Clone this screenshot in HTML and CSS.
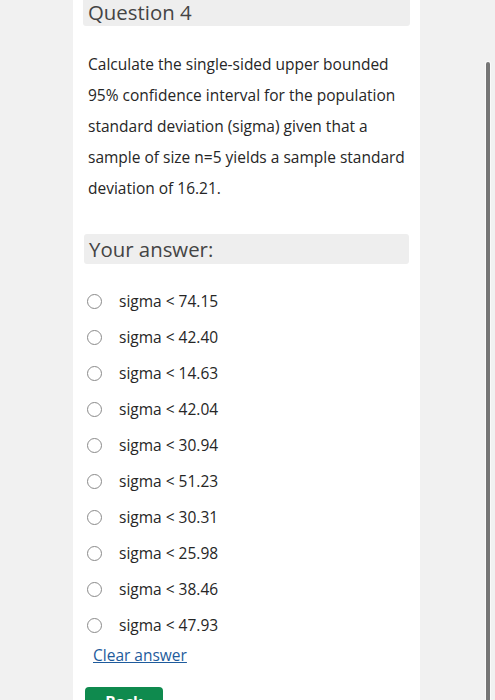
FILE: index.html
```html
<!DOCTYPE html>
<html lang="en">
<head>
<meta charset="utf-8">
<title>Question 4</title>
<link rel="stylesheet" href="styles.css">
</head>
<body>
<div class="page">
  <main class="card">
    <h2 class="qhead">Question 4</h2>
    <p class="qtext">Calculate the single-sided upper bounded<br>95% confidence interval for the population<br>standard deviation (sigma) given that a<br>sample of size n=5 yields a sample standard<br>deviation of 16.21.</p>
    <h3 class="answer-head">Your answer:</h3>
    <ul class="options">
      <li class="opt"><span class="radio"></span><span>sigma &lt; 74.15</span></li>
      <li class="opt"><span class="radio"></span><span>sigma &lt; 42.40</span></li>
      <li class="opt"><span class="radio"></span><span>sigma &lt; 14.63</span></li>
      <li class="opt"><span class="radio"></span><span>sigma &lt; 42.04</span></li>
      <li class="opt"><span class="radio"></span><span>sigma &lt; 30.94</span></li>
      <li class="opt"><span class="radio"></span><span>sigma &lt; 51.23</span></li>
      <li class="opt"><span class="radio"></span><span>sigma &lt; 30.31</span></li>
      <li class="opt"><span class="radio"></span><span>sigma &lt; 25.98</span></li>
      <li class="opt"><span class="radio"></span><span>sigma &lt; 38.46</span></li>
      <li class="opt"><span class="radio"></span><span>sigma &lt; 47.93</span></li>
    </ul>
    <a class="clear" href="#">Clear answer</a>
    <button class="back" type="button">Back</button>
  </main>
</div>
<div class="scrollbar"></div>
</body>
</html>
```

FILE: styles.css
```css
html, body {
  margin: 0;
  padding: 0;
}
body {
  background: #f1f1f1;
  font-family: "Open Sans", "Noto Sans", sans-serif;
  height: 700px;
  overflow: hidden;
  position: relative;
}
.page {
  display: flex;
  padding-left: 73px;
}
.card {
  width: 347px;
  box-sizing: border-box;
  min-height: 700px;
  background: #ffffff;
  padding: 0 10px;
  display: flex;
  flex-direction: column;
  align-items: stretch;
}
.qhead {
  margin: 0;
  background: #eeeeee;
  border-radius: 0 0 3px 3px;
  padding: 0 5px 2px;
  font-size: 20.4px;
  line-height: 24px;
  font-weight: 400;
  color: #444444;
}
.qtext {
  margin: 23px 0 0;
  padding-left: 5px;
  font-size: 15.5px;
  line-height: 31px;
  color: #262626;
  white-space: nowrap;
}
.answer-head {
  margin: 30px 1px 0;
  background: #eeeeee;
  border-radius: 3px;
  padding: 0 5px;
  font-size: 20.4px;
  line-height: 30px;
  font-weight: 400;
  color: #444444;
}
.options {
  list-style: none;
  margin: 19px 0 0;
  padding: 0;
}
.opt {
  height: 36px;
  display: flex;
  align-items: center;
  gap: 17px;
  padding-left: 4px;
  font-size: 15.5px;
  line-height: 20px;
  color: #262626;
}
.radio {
  width: 15px;
  height: 15px;
  box-sizing: border-box;
  border: 1.5px solid #8a8a8a;
  border-radius: 50%;
  flex: none;
}
.clear {
  align-self: flex-start;
  margin: 2px 0 0 10px;
  font-size: 15.5px;
  line-height: 20px;
  color: #1e5b9c;
  text-decoration: underline;
}
.back {
  align-self: flex-start;
  margin: 22px 0 0 2px;
  width: 78px;
  border: none;
  border-radius: 4px;
  background: #0f8a4e;
  color: #ffffff;
  font-family: "Open Sans", "Noto Sans", sans-serif;
  font-size: 15.5px;
  font-weight: 700;
  line-height: 20px;
  padding: 5px 0 12px;
}
.scrollbar {
  position: absolute;
  left: 486px;
  top: 62px;
  width: 4px;
  height: 650px;
  background: #767676;
  border-radius: 2px;
  box-shadow: 0 0 0 1px #fafafa;
}
```
